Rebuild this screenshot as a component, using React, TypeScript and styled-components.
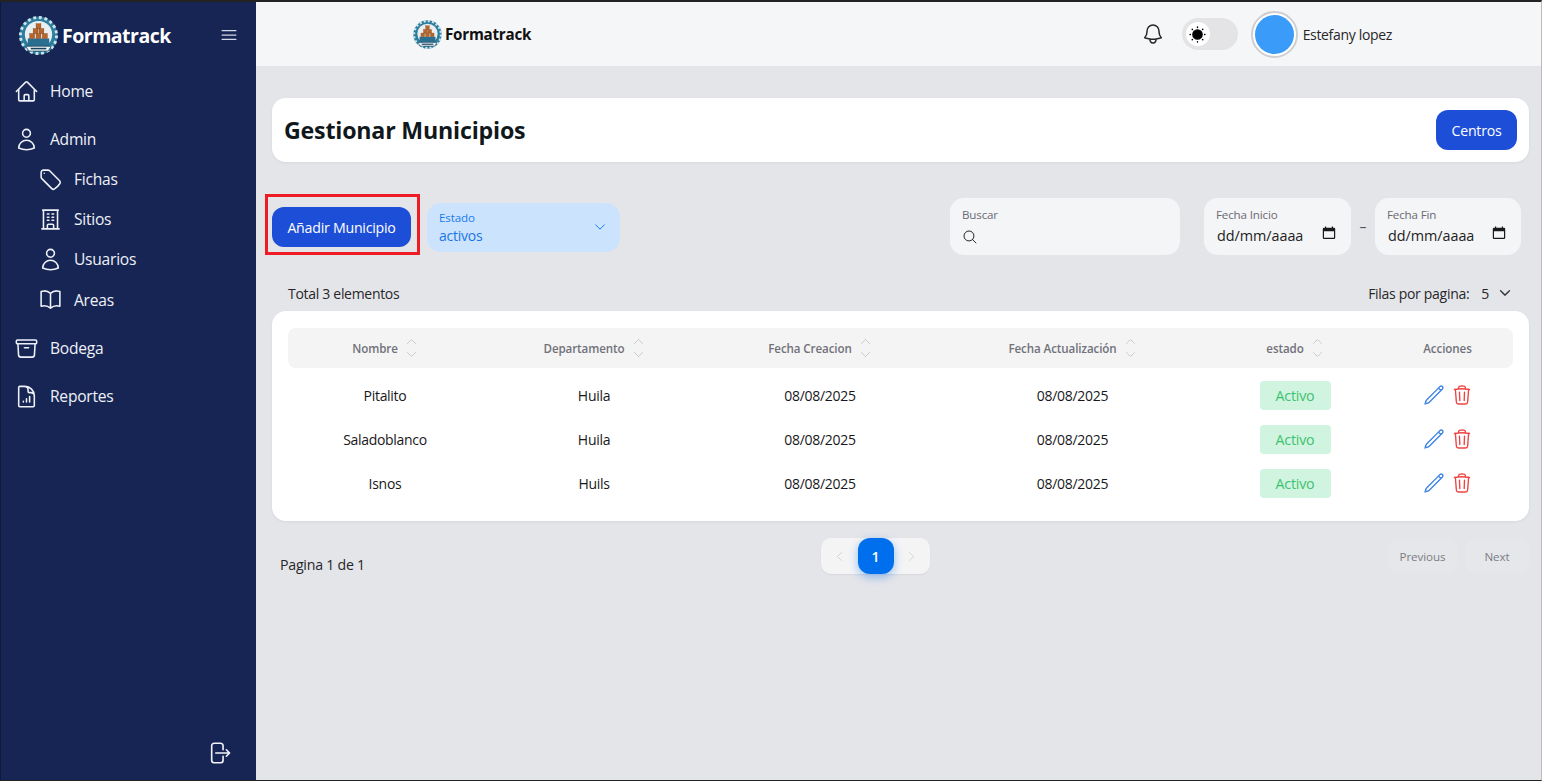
import React from "react";
import styled, { createGlobalStyle } from "styled-components";
import {
  HiOutlineHome, HiOutlineUser, HiOutlineTag, HiOutlineBuildingOffice, HiOutlineBookOpen,
  HiOutlineArchiveBox, HiOutlineDocumentChartBar, HiOutlineBell, HiOutlineBars3,
  HiOutlineMagnifyingGlass, HiOutlinePencil, HiOutlineTrash, HiOutlineArrowRightStartOnRectangle,
  HiOutlineChevronDown, HiOutlineChevronUp, HiOutlineChevronLeft, HiOutlineChevronRight, HiChevronDown,
} from "react-icons/hi2";

const Global = createGlobalStyle`
  html, body { margin: 0; padding: 0; background: #e4e5e9; }
  body { font-family: "Open Sans", "Noto Sans", "Liberation Sans", sans-serif; overflow: hidden; }
  * { box-sizing: border-box; }
`;

const Frame = styled.div`
  width: 1542px; height: 781px; display: flex;
  border-top: 2px solid #232323; border-bottom: 1px solid #232323; border-right: 1px solid #bcbcc0;
  overflow: hidden; background: #e4e5e9;
`;
const Sidebar = styled.aside`
  width: 256px; flex: none; background: #172554; color: #f1f3f8;
  display: flex; flex-direction: column; border-left: 1px solid #10193a;
`;
const Brand = styled.div`
  height: 64px; display: flex; align-items: center; padding: 2px 17px 0 18px; margin-bottom: 1px;
`;
const BrandName = styled.span`
  font-size: 19.5px; font-weight: 700; color: #fff; margin-left: 4px; flex: 1; letter-spacing: -0.5px;
`;
const Burger = styled(HiOutlineBars3)`
  width: 20px; height: 20px; color: #d5d9e6;
`;
const NavItem = styled.div<{ $sub?: boolean; $h: number; $top?: number }>`
  display: flex; align-items: center; height: ${p => p.$h}px; margin-top: ${p => p.$top ?? 0}px;
  padding-left: ${p => (p.$sub ? 37 : 13)}px; gap: 11px;
  font-size: 15.6px; letter-spacing: -0.25px; color: #eef1f7;
  svg { width: 25px; height: 25px; flex: none; }
`;
const NavSpacer = styled.div`flex: 1;`;
const Logout = styled.div`
  height: 54px; display: flex; justify-content: flex-end; padding-right: 24px; padding-top: 14px;
  svg { width: 26px; height: 26px; color: #f1f3f8; }
`;
const Content = styled.main`flex: 1; display: flex; flex-direction: column; min-width: 0;`;
const Header = styled.header`
  height: 64px; background: #f5f6f8; display: flex; align-items: center; padding: 0 0 0 157px; flex: none;
`;
const HeaderBrand = styled.div`
  display: flex; align-items: center; gap: 3px; font-size: 15.2px; font-weight: 700; color: #111; letter-spacing: -0.25px;
`;
const HeaderRight = styled.div`
  margin-left: auto; display: flex; align-items: center; padding-right: 149px;
`;
const Bell = styled(HiOutlineBell)`
  width: 24px; height: 24px; color: #27272a; margin-right: 17px;
`;
const Toggle = styled.div`
  width: 56px; height: 32px; border-radius: 16px; background: #e4e4e7; display: flex; align-items: center; padding-left: 4px; margin-right: 13px;
`;
const Knob = styled.div`
  width: 24px; height: 24px; border-radius: 50%; background: #fff; display: flex; align-items: center; justify-content: center;
`;
const Avatar = styled.div`
  width: 47px; height: 47px; border-radius: 50%; background: #fff; border: 2px solid #cfcfd3; display: flex; align-items: center; justify-content: center; margin-right: 5px;
`;
const AvatarFill = styled.div`
  width: 39px; height: 39px; border-radius: 50%; background: #3b9bf8;
`;
const UserName = styled.span`font-size: 14px; color: #27272a; letter-spacing: -0.33px;`;
const Body = styled.div`
  flex: 1; padding: 32px 12px 0 16px; display: flex; flex-direction: column;
`;
const TitleCard = styled.section`
  height: 64px; background: #fff; border-radius: 14px; display: flex; align-items: center; justify-content: space-between;
  padding: 0 12px; box-shadow: 0 1px 3px rgba(0,0,0,.06);
`;
const Title = styled.h1`
  margin: 0; font-size: 23.2px; font-weight: 700; color: #11181c; letter-spacing: -0.2px;
`;
const PrimaryButton = styled.button<{ $w: number; $h: number }>`
  width: ${p => p.$w}px; height: ${p => p.$h}px; border: none; border-radius: 12px; background: #1d4ed8; color: #fff;
  font-family: inherit; font-size: 14.2px; letter-spacing: -0.25px; padding: 0;
`;
const Toolbar = styled.div`
  display: flex; align-items: center; height: 57px; margin-top: 36px;
`;
const Highlight = styled.div`
  margin-left: -7px; width: 155px; height: 61px; border: 3px solid #ee1c25; display: flex; align-items: center; padding: 5px 0 0 4px;
  align-self: flex-start; margin-top: -4px; flex: none;
`;
const SelectBox = styled.div`
  width: 193px; height: 49px; margin-left: 7px; margin-top: 2px; background: #cce3fd; border-radius: 14px; color: #006fee;
  display: flex; align-items: center; justify-content: space-between; padding: 0 13px 0 12px;
  svg { width: 14px; height: 14px; margin-top: -2px; }
`;
const FieldStack = styled.div`display: flex; flex-direction: column;`;
const SmallLabel = styled.span<{ $muted?: boolean }>`
  font-size: 11.6px; line-height: 15px; letter-spacing: -0.15px; color: ${p => (p.$muted ? "#6b6b72" : "#1a7cef")};
`;
const SelectValue = styled.span`font-size: 14px; line-height: 21px; letter-spacing: -0.25px; color: #1a76e4;`;
const Field = styled.div<{ $w: number; $ml: number }>`
  width: ${p => p.$w}px; height: 57px; margin-left: ${p => p.$ml}px; background: #f4f5f7; border-radius: 14px;
  padding: 9px 12px; display: flex; flex-direction: column; flex: none;
`;
const FieldRow = styled.div`
  display: flex; align-items: center; justify-content: space-between; height: 24px; margin-top: 2px; color: #222;
  font-size: 14.4px; letter-spacing: -0.05px; padding: 0 3px 0 1px;
`;
const CalendarIcon = styled.svg`
  width: 14px; height: 14px; margin-top: -4px; flex: none;
`;
const SearchIcon = styled(HiOutlineMagnifyingGlass)`
  width: 16px; height: 16px; margin: 4px 0 0 -1px; color: #27272a;
`;
const Dash = styled.span`
  width: 24px; text-align: center; font-size: 14px; color: #52525b; flex: none;
`;
const ToolSpacer = styled.div`flex: 1;`;
const EndGap = styled.div`width: 8px; flex: none;`;
const InfoRow = styled.div`
  display: flex; justify-content: space-between; align-items: center; height: 24px; margin-top: 26px; padding: 0 17px 0 16px;
  font-size: 14px; color: #27272a; letter-spacing: -0.3px;
`;
const Rows = styled.span`
  display: flex; align-items: center; gap: 12px;
  svg { width: 14px; height: 14px; color: #222; margin-left: -3px; stroke: currentColor; stroke-width: 1; }
`;
const TableCard = styled.section`
  margin-top: 6px; background: #fff; border-radius: 14px; height: 210px; padding: 17px 16px 0;
  box-shadow: 0 1px 3px rgba(0,0,0,.06);
`;
const columns = "194px 224px 228px 277px 168px 134px";
const HeadRow = styled.div`
  display: grid; grid-template-columns: ${columns}; height: 40px; background: #f4f4f5; border-radius: 8px; align-items: center;
  font-size: 11.6px; font-weight: 600; color: #71717a; letter-spacing: -0.1px; margin-bottom: 5px;
`;
const HeadCell = styled.div<{ $shift?: number }>`
  display: flex; align-items: center; justify-content: center; gap: 7px; padding-left: ${p => p.$shift ?? 0}px;
`;
const Sort = styled.span`
  display: flex; flex-direction: column; color: #bfbfc5;
  svg { width: 13px; height: 13px; display: block; }
`;
const Row = styled.div`
  display: grid; grid-template-columns: ${columns}; height: 44.3px; align-items: center; justify-items: center;
  font-size: 14px; color: #18181b; letter-spacing: -0.3px;
`;
const Chip = styled.span`
  width: 71px; height: 29px; border-radius: 4px; background: #d1f4e0; color: #3cc26f; display: flex; align-items: center; justify-content: center; font-size: 14.2px; letter-spacing: -0.2px;
`;
const Actions = styled.div`
  display: flex; align-items: center; gap: 6px; margin-left: 3px; margin-top: -1px;
  svg { width: 22px; height: 22px; display: block; }
`;
const EditIcon = styled(HiOutlinePencil)`color: #3b82e6;`;
const TrashIcon = styled(HiOutlineTrash)`color: #ef4444;`;
const Footer = styled.div`
  display: grid; grid-template-columns: 541px 109px 1fr; margin-top: 17px; align-items: start; margin-left: 8px;
`;
const PageText = styled.span`font-size: 14.2px; color: #27272a; letter-spacing: -0.25px; margin-top: 17px;`;
const Pager = styled.div`
  width: 109px; height: 36px; background: #f4f4f5; border-radius: 10px; display: flex; align-items: center; justify-content: space-between; padding: 0 12px;
  box-shadow: 0 1px 2px rgba(0,0,0,.06);
  svg { width: 13px; height: 13px; color: #cfcfd4; }
`;
const CurrentPage = styled.div`
  width: 36px; height: 36px; border-radius: 12px; background: #006fee; color: #fff; display: flex; align-items: center; justify-content: center;
  font-size: 14px; font-weight: 600; box-shadow: 0 3px 10px rgba(0,111,238,.4);
`;
const NavButtons = styled.div`display: flex; justify-content: flex-end; gap: 8px; margin-top: 2px;`;
const GhostButton = styled.span<{ $w: number }>`
  width: ${p => p.$w}px; height: 32px; background: #e6e7ea; border-radius: 8px; display: flex; align-items: center; justify-content: center;
  color: #7c7c84; font-size: 11.6px; letter-spacing: -0.1px;
`;

const Logo = ({ size }: { size: number }) => (
  <svg width={size} height={size} viewBox="0 0 40 40" style={{ flex: "none" }}>
    <circle cx="20" cy="20" r="19.5" fill="#2b7e9e" />
    <circle cx="20" cy="20" r="18.5" fill="none" stroke="#cfe3ea" strokeWidth="3" strokeDasharray="3 2.8" />
    <circle cx="20" cy="19" r="14" fill="#e9eef0" />
    <rect x="9" y="23" width="22" height="8" fill="#2a6f8f" />
    <g fill="#b8652c" stroke="#7c3f17" strokeWidth=".4">
      <rect x="17.5" y="8" width="5" height="5" />
      <rect x="14.5" y="13" width="5" height="5" /><rect x="20.5" y="13" width="5" height="5" />
      <rect x="11" y="18" width="5" height="5" /><rect x="17.5" y="18" width="5" height="5" /><rect x="24" y="18" width="5" height="5" />
    </g>
    <path d="M7 31h26l-3 5H10z" fill="#f2f5f6" stroke="#17445c" strokeWidth=".8" />
    <rect x="12" y="32.6" width="16" height="1.6" fill="#17445c" />
  </svg>
);

const Sun = () => (
  <svg width="17" height="17" viewBox="0 0 24 24" fill="#000" stroke="#000" strokeWidth="2" strokeLinecap="round">
    <circle cx="12" cy="12" r="6.5" />
    <path d="M12 1.5v.5M12 22v.5M1.5 12h.5M22 12h.5M4.5 4.5l.4.4M19.1 19.1l.4.4M4.5 19.5l.4-.4M19.1 4.9l.4-.4" />
  </svg>
);

const Calendar = () => (
  <CalendarIcon viewBox="0 0 14 14" fill="none">
    <path fillRule="evenodd" clipRule="evenodd" fill="#1a1a1a"
      d="M3 0.5h1.2v1.2h5.6V.5H11v1.2h1A1.2 1.2 0 0 1 13.2 3v8.8A1.2 1.2 0 0 1 12 13H2A1.2 1.2 0 0 1 .8 11.8V3A1.2 1.2 0 0 1 2 1.7h1zM2 5.2v6.6h10V5.2z" />
  </CalendarIcon>
);

const SortIcon = () => (
  <Sort><HiOutlineChevronUp /><HiOutlineChevronDown /></Sort>
);

const heads = ["Nombre", "Departamento", "Fecha Creacion", "Fecha Actualización", "estado"];
const data = [["Pitalito", "Huila"], ["Saladoblanco", "Huila"], ["Isnos", "Huils"]];

export default function App() {
  return (
    <>
      <Global />
      <Frame>
        <Sidebar>
          <Brand>
            <Logo size={39} />
            <BrandName>Formatrack</BrandName>
            <Burger />
          </Brand>
          <NavItem $h={48}><HiOutlineHome />Home</NavItem>
          <NavItem $h={40} $top={4}><HiOutlineUser />Admin</NavItem>
          <NavItem $sub $h={40}><HiOutlineTag />Fichas</NavItem>
          <NavItem $sub $h={40}><HiOutlineBuildingOffice />Sitios</NavItem>
          <NavItem $sub $h={40}><HiOutlineUser />Usuarios</NavItem>
          <NavItem $sub $h={41}><HiOutlineBookOpen />Areas</NavItem>
          <NavItem $h={56}><HiOutlineArchiveBox />Bodega</NavItem>
          <NavItem $h={40}><HiOutlineDocumentChartBar />Reportes</NavItem>
          <NavSpacer />
          <Logout><HiOutlineArrowRightStartOnRectangle /></Logout>
        </Sidebar>
        <Content>
          <Header>
            <HeaderBrand><Logo size={29} />Formatrack</HeaderBrand>
            <HeaderRight>
              <Bell />
              <Toggle><Knob><Sun /></Knob></Toggle>
              <Avatar><AvatarFill /></Avatar>
              <UserName>Estefany lopez</UserName>
            </HeaderRight>
          </Header>
          <Body>
            <TitleCard>
              <Title>Gestionar Municipios</Title>
              <PrimaryButton $w={81} $h={40}>Centros</PrimaryButton>
            </TitleCard>
            <Toolbar>
              <Highlight><PrimaryButton $w={139} $h={40}>Añadir Municipio</PrimaryButton></Highlight>
              <SelectBox>
                <FieldStack>
                  <SmallLabel>Estado</SmallLabel>
                  <SelectValue>activos</SelectValue>
                </FieldStack>
                <HiOutlineChevronDown />
              </SelectBox>
              <ToolSpacer />
              <Field $w={230} $ml={0}>
                <SmallLabel $muted>Buscar</SmallLabel>
                <FieldRow><SearchIcon /></FieldRow>
              </Field>
              <Field $w={147} $ml={24}>
                <SmallLabel $muted>Fecha Inicio</SmallLabel>
                <FieldRow>dd/mm/aaaa<Calendar /></FieldRow>
              </Field>
              <Dash>–</Dash>
              <Field $w={146} $ml={0}>
                <SmallLabel $muted>Fecha Fin</SmallLabel>
                <FieldRow>dd/mm/aaaa<Calendar /></FieldRow>
              </Field>
              <EndGap />
            </Toolbar>
            <InfoRow>
              <span>Total 3 elementos</span>
              <Rows>Filas por pagina: <span>5</span><HiChevronDown /></Rows>
            </InfoRow>
            <TableCard>
              <HeadRow>
                {heads.map(h => <HeadCell key={h}>{h}<SortIcon /></HeadCell>)}
                <HeadCell $shift={3}>Acciones</HeadCell>
              </HeadRow>
              {data.map(([n, d]) => (
                <Row key={n}>
                  <span>{n}</span>
                  <span>{d}</span>
                  <span>08/08/2025</span>
                  <span>08/08/2025</span>
                  <Chip>Activo</Chip>
                  <Actions><EditIcon /><TrashIcon /></Actions>
                </Row>
              ))}
            </TableCard>
            <Footer>
              <PageText>Pagina 1 de 1</PageText>
              <Pager>
                <HiOutlineChevronLeft />
                <CurrentPage>1</CurrentPage>
                <HiOutlineChevronRight />
              </Pager>
              <NavButtons>
                <GhostButton $w={69}>Previous</GhostButton>
                <GhostButton $w={64}>Next</GhostButton>
              </NavButtons>
            </Footer>
          </Body>
        </Content>
      </Frame>
    </>
  );
}
